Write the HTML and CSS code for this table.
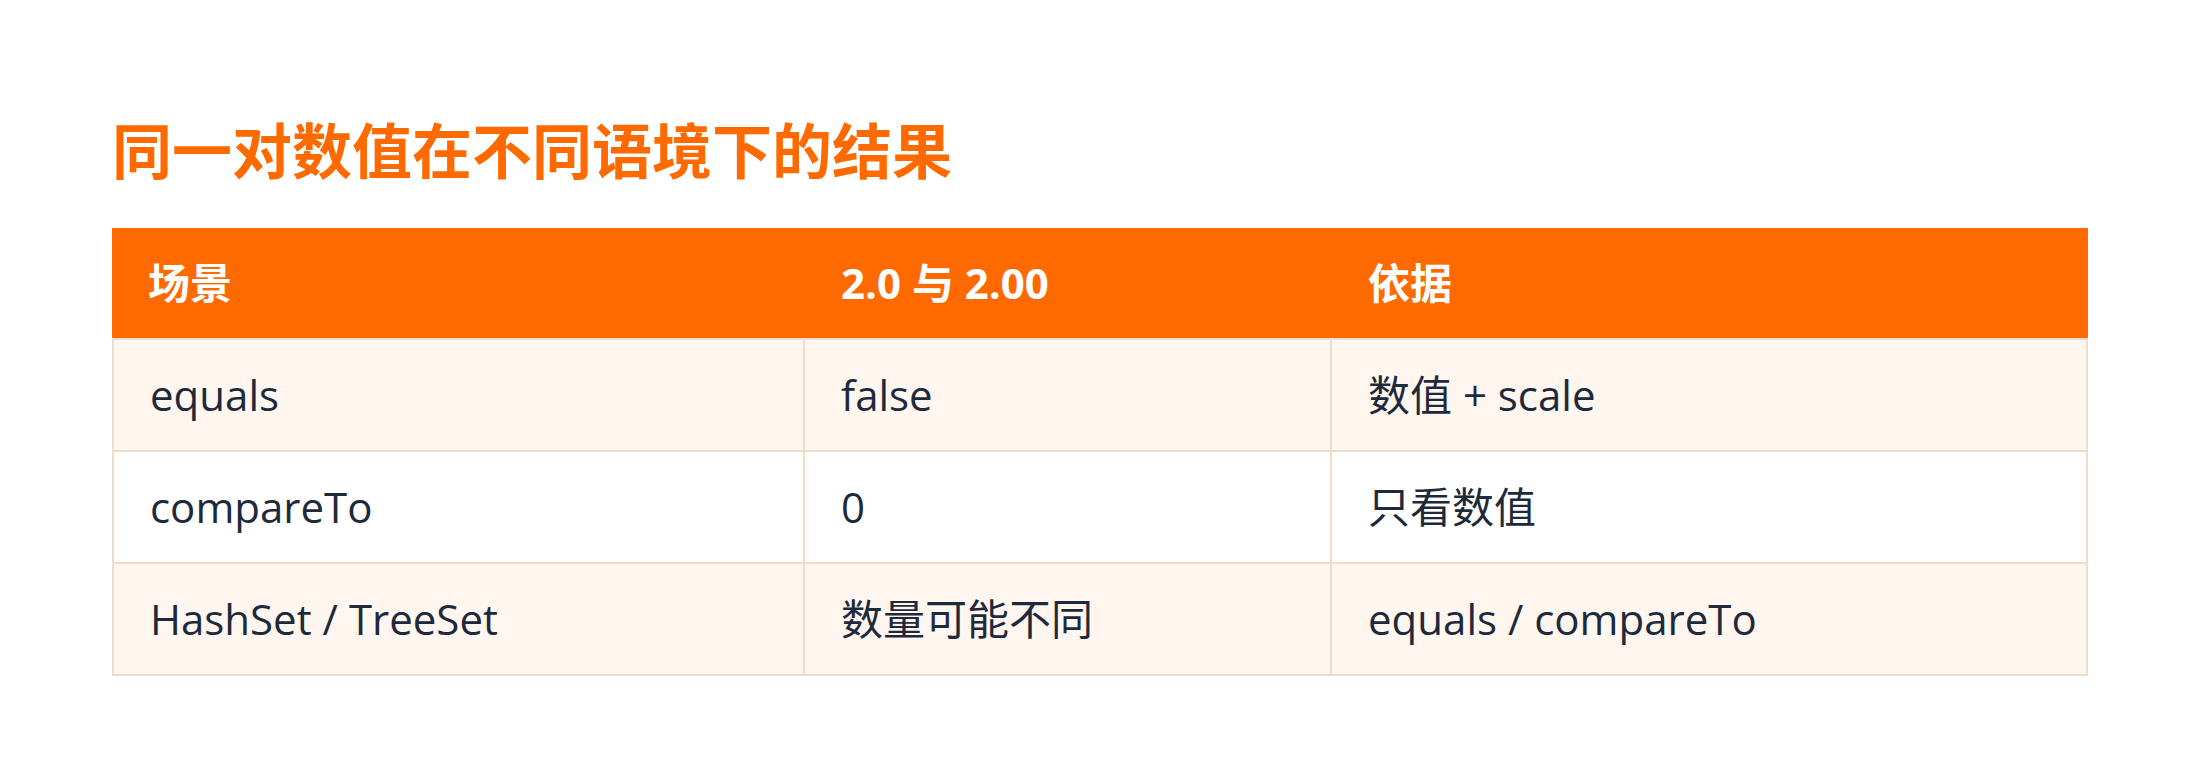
FILE: index.html
```html
<!DOCTYPE html>
<html lang="zh-CN">
<head>
<meta charset="utf-8">
<title>同一对数值在不同语境下的结果</title>
<link rel="stylesheet" href="styles.css">
</head>
<body>
<main class="page">
  <h1 class="title">同一对数值在不同语境下的结果</h1>
  <table class="cmp">
    <colgroup>
      <col class="c1"><col class="c2"><col class="c3">
    </colgroup>
    <thead>
      <tr><th>场景</th><th>2.0 与 2.00</th><th>依据</th></tr>
    </thead>
    <tbody>
      <tr class="odd"><td>equals</td><td>false</td><td>数值 + scale</td></tr>
      <tr><td>compareTo</td><td>0</td><td>只看数值</td></tr>
      <tr class="odd"><td>HashSet / TreeSet</td><td>数量可能不同</td><td>equals / compareTo</td></tr>
    </tbody>
  </table>
</main>
</body>
</html>
```
FILE: styles.css
```css
html, body {
  margin: 0;
  padding: 0;
  background: #ffffff;
}
body {
  font-family: "Open Sans", "Noto Sans CJK SC", sans-serif;
  color: #1e2a3b;
}
.page {
  padding: 112px 112px 0 112px;
}
.title {
  margin: 0 0 44px 0;
  font-family: "Noto Sans CJK SC", sans-serif;
  font-size: 60px;
  line-height: 72px;
  font-weight: 700;
  color: #ff6a00;
}
.cmp {
  width: 100%;
  border-collapse: separate;
  border-spacing: 0;
  table-layout: fixed;
  font-size: 42px;
}
.c1 { width: 693px; }
.c2 { width: 527px; }
.c3 { width: auto; }
.cmp th {
  background: #ff6a00;
  color: #ffffff;
  font-weight: 700;
  text-align: left;
  height: 110px;
  padding: 0 36px;
  line-height: 60px;
  box-sizing: border-box;
}
.cmp td {
  height: 112px;
  box-sizing: border-box;
  padding: 0 34px 0 36px;
  line-height: 60px;
  border-right: 2px solid #f1dccb;
  border-bottom: 2px solid #f1dccb;
  background: #ffffff;
}
.cmp td:first-child {
  border-left: 2px solid #f1dccb;
  padding-left: 36px;
}
.cmp tbody tr:first-child td {
  border-top: 2px solid #f1dccb;
  height: 114px;
}
.cmp tr.odd td {
  background: #fff6f0;
}
```
